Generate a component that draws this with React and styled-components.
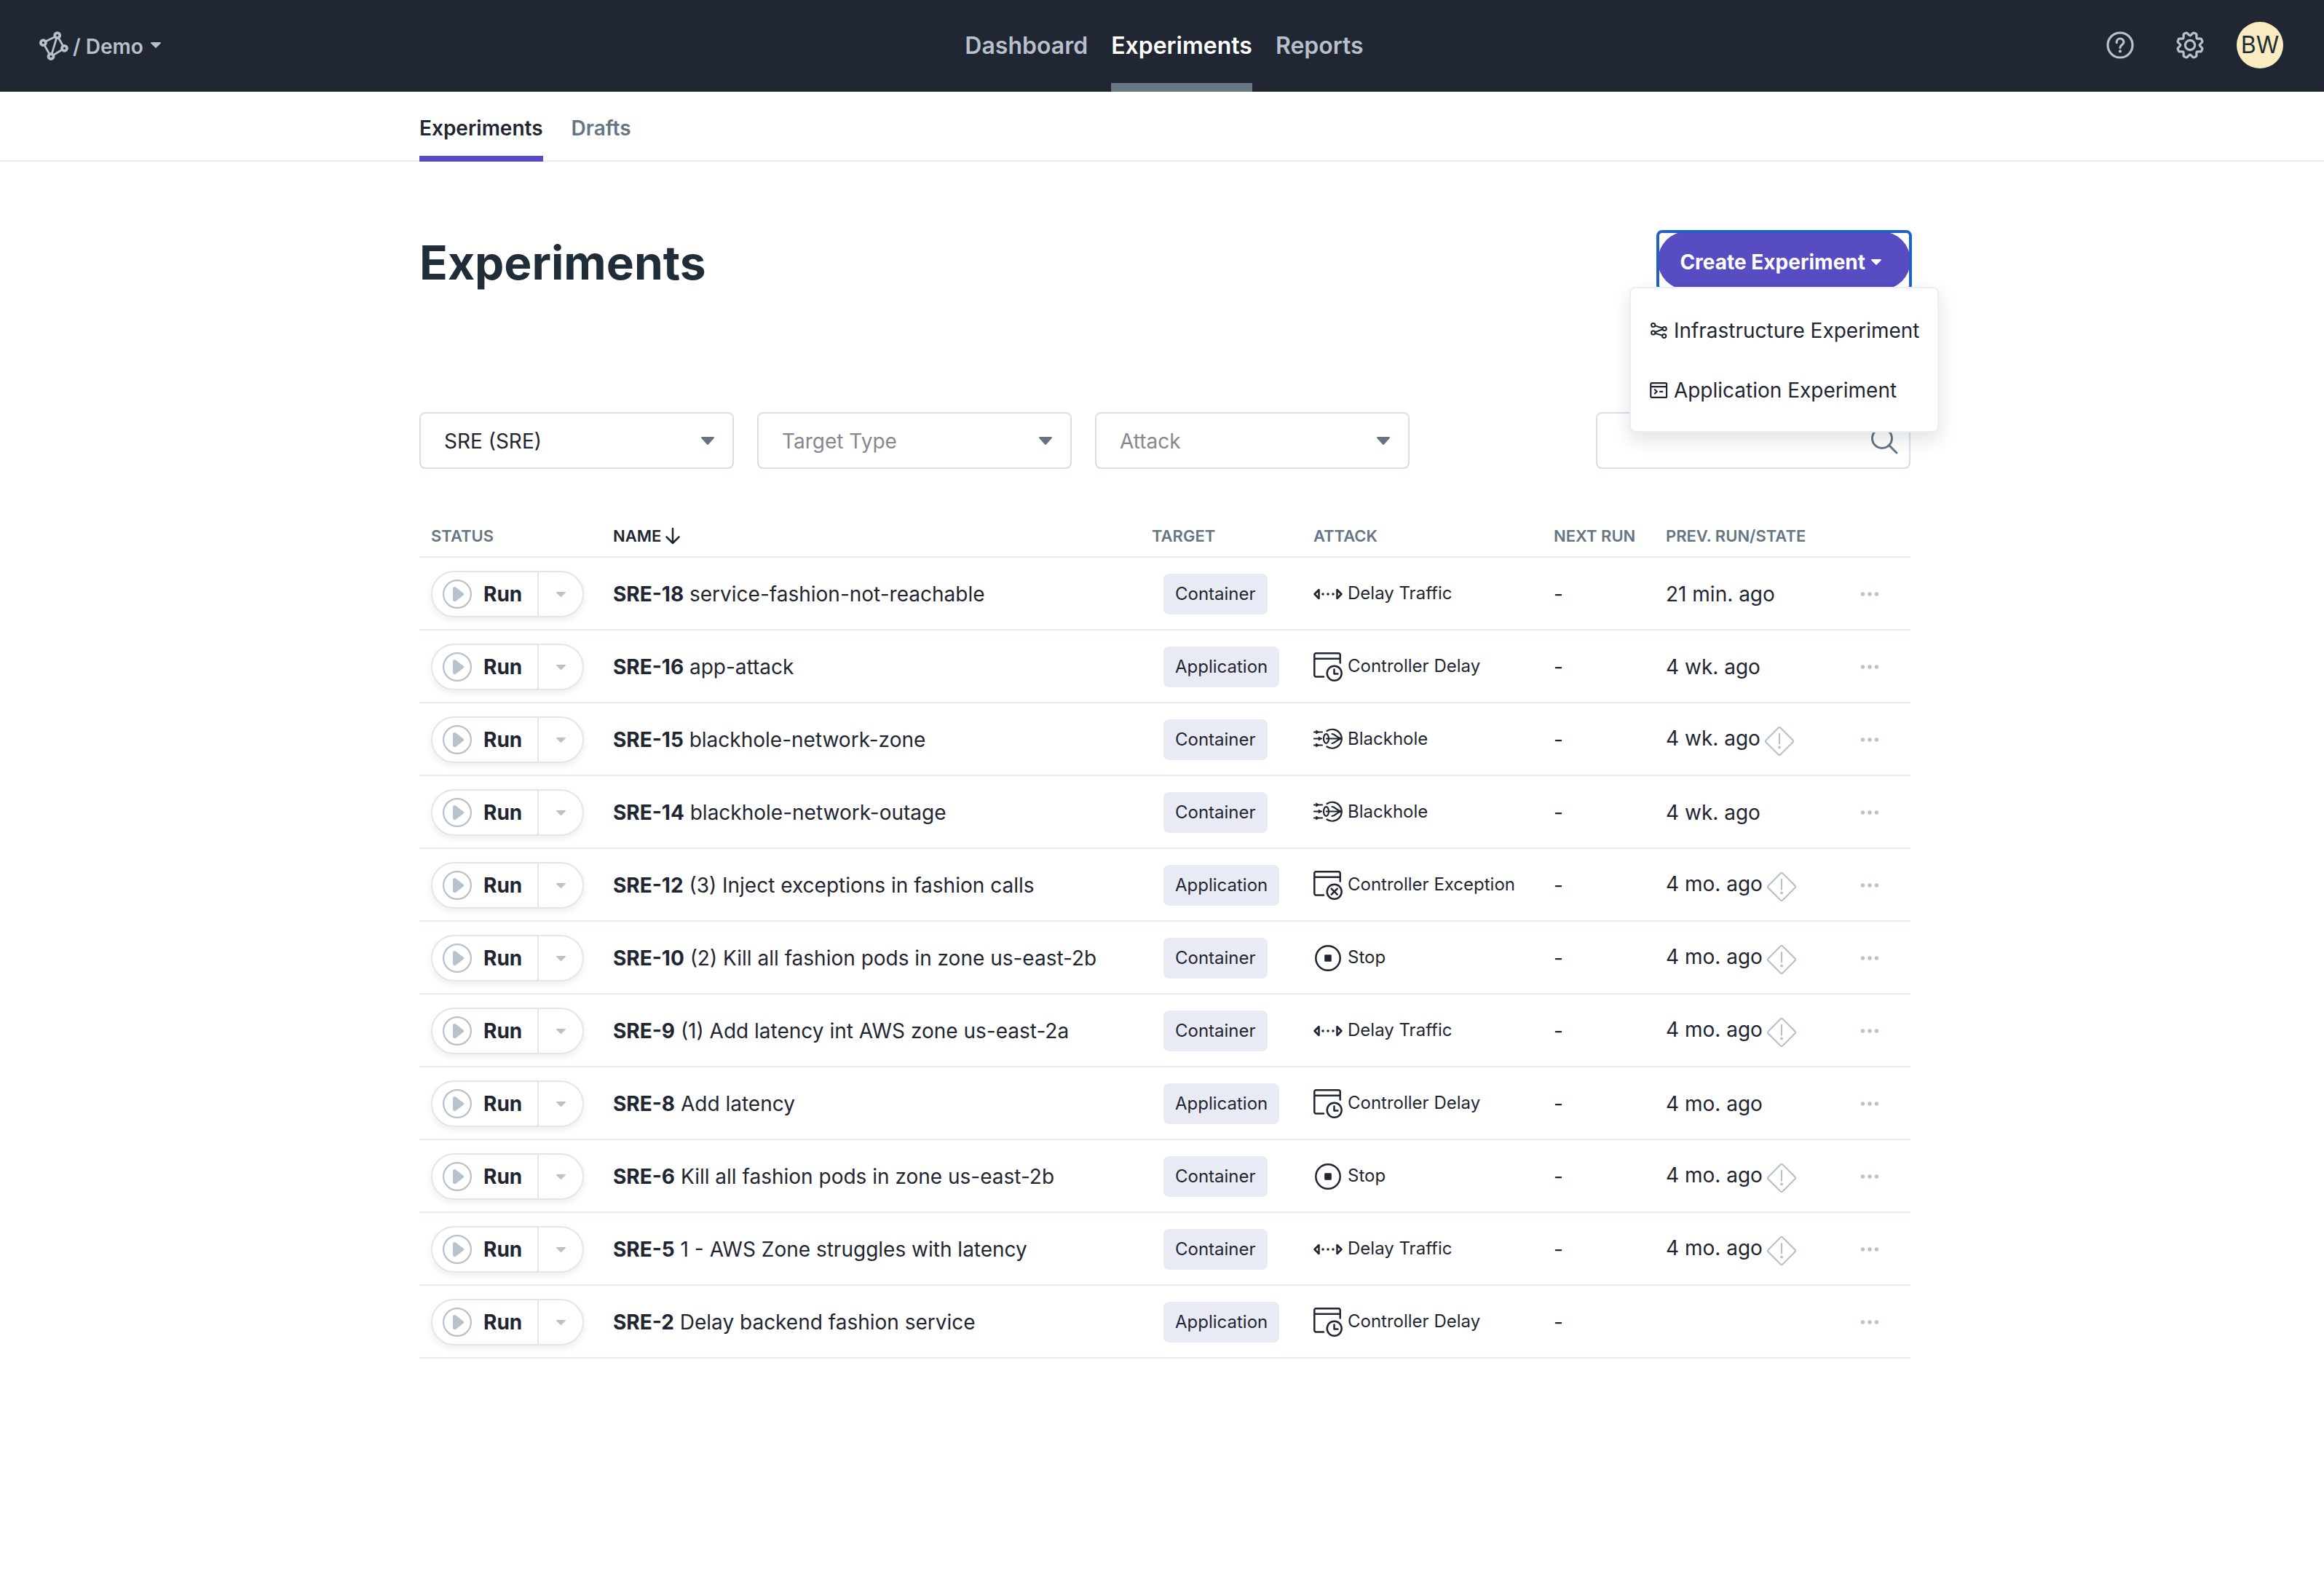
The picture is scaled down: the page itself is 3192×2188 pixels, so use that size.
import React from "react";
import styled, { createGlobalStyle } from "styled-components";

const color = {
  ink: "#1f2632",
  title: "#202d38",
  slate: "#677583",
  mist: "#b9c1cd",
  line: "#e7ebf2",
  field: "#d8dfeb",
  purple: "#574cc1",
  focus: "#2161c5",
  placeholder: "#85898f",
};

const GlobalStyle = createGlobalStyle`
  *, *::before, *::after { box-sizing: border-box; }
  body {
    margin: 0;
    background: #fff;
    color: ${color.ink};
    font-family: Inter, "Liberation Sans", sans-serif;
    font-size: 28px;
    line-height: 40px;
  }
  button, input, select { font: inherit; color: inherit; }
  button { padding: 0; border: 0; background: none; cursor: pointer; }
  a { color: inherit; text-decoration: none; }
  svg { display: block; flex: none; }
`;

/* ---------- header ---------- */

const Header = styled.header`
  display: grid;
  grid-template-columns: 1fr auto 1fr;
  height: 126px;
  padding: 0 44px 0 50px;
  background: #202632;
  color: #b8bfcd;
`;

const Brand = styled.button`
  display: flex;
  align-items: center;
  justify-self: start;
  gap: 6px;
  padding-left: 4px;
  font-weight: 600;
`;

const BrandName = styled.span`
  padding-top: 2px;
`;

const BrandCaret = styled.span`
  display: flex;
  padding: 0 0 2px 4px;
`;

const MainNav = styled.nav`
  display: flex;
  gap: 32px;
`;

const MainLink = styled.a`
  display: flex;
  align-items: center;
  border-bottom: 12px solid ${(p) => (p.$active ? "#697683" : "transparent")};
  padding-top: 12px;
  color: ${(p) => (p.$active ? "#fff" : "inherit")};
  font-size: 32px;
  font-weight: 600;
`;

const Tools = styled.div`
  display: flex;
  align-items: center;
  justify-self: end;
  padding: 0 12px 2px 0;
`;

const ToolButton = styled.button`
  display: flex;
  justify-content: center;
  align-items: center;
  width: 96px;
  height: 64px;
`;

const Avatar = styled.button`
  width: 64px;
  height: 64px;
  margin-left: 16px;
  border-radius: 50%;
  background: #faecc0;
  color: ${color.title};
  font-size: 32px;
  line-height: 64px;
`;

/* ---------- tabs ---------- */

const SubNav = styled.nav`
  height: 96px;
  padding-left: 8px;
  border-bottom: 2px solid ${color.line};
`;

const Centered = styled.div`
  width: 100%;
  max-width: 2048px;
  margin: 0 auto;
`;

const Tabs = styled(Centered)`
  display: flex;
  gap: 39px;
`;

const Tab = styled.a`
  height: 96px;
  padding-top: 30px;
  border-bottom: 8px solid ${(p) => (p.$active ? color.purple : "transparent")};
  color: ${(p) => (p.$active ? color.ink : color.slate)};
  font-weight: 600;
`;

/* ---------- page ---------- */

const Main = styled.main`
  padding: 96px 0 96px 8px;
`;

const TitleRow = styled.div`
  display: flex;
  justify-content: space-between;
  align-items: center;
  height: 80px;
`;

const Title = styled.h1`
  margin: 0;
  padding-top: 6px;
  color: ${color.title};
  font-size: 64px;
  line-height: 80px;
  font-weight: 700;
`;

const CreateWrap = styled.div`
  position: relative;
`;

const CreateButton = styled.button`
  display: flex;
  align-items: center;
  gap: 8px;
  height: 80px;
  padding: 4px 40px 0 30px;
  border-radius: 40px;
  background: ${color.purple};
  color: #fff;
  font-weight: 700;
`;

const FocusFrame = styled.span`
  position: absolute;
  inset: -2px;
  border: 4px solid ${color.focus};
  border-radius: 8px;
  pointer-events: none;
`;

const Menu = styled.div`
  position: absolute;
  z-index: 2;
  top: 76px;
  left: 50%;
  transform: translateX(-50%);
  padding: 16px 0;
  border: 2px solid #e9edf5;
  border-radius: 8px;
  background: #fff;
  box-shadow: 0 10px 24px rgba(31, 38, 50, 0.13);
`;

const MenuItem = styled.button`
  display: flex;
  align-items: center;
  gap: 8px;
  width: 100%;
  height: 82px;
  padding: 2px 25px 0;
  white-space: nowrap;
`;

/* ---------- filters ---------- */

const Filters = styled.form`
  display: flex;
  gap: 32px;
  margin-top: 168px;
`;

const Field = styled.label`
  display: grid;
  align-items: center;
  width: 432px;
  margin-left: ${(p) => (p.$end ? "auto" : "0")};

  & > * { grid-area: 1 / 1; }
  & > svg {
    justify-self: end;
    margin-right: ${(p) => (p.$end ? "16px" : "27px")};
    pointer-events: none;
  }
`;

const control = `
  width: 100%;
  height: 78px;
  padding: 2px 64px 0 32px;
  border: 2px solid ${color.field};
  border-radius: 8px;
  background: #fff;
  outline: 0;
  appearance: none;
`;

const Select = styled.select`
  ${control}
  color: ${(p) => (p.$empty ? color.placeholder : color.ink)};
`;

const SearchInput = styled.input`
  ${control}
`;

/* ---------- table ---------- */

const Table = styled.table`
  width: 100%;
  margin-top: 62px;
  border-spacing: 0;
  table-layout: fixed;
`;

const Col = styled.col`
  width: ${(p) => p.$w};
`;

const Th = styled.th`
  height: 60px;
  padding: 2px 16px 0;
  border-bottom: 2px solid ${color.line};
  color: ${(p) => (p.$sorted ? color.ink : color.slate)};
  font-size: 22px;
  line-height: 28px;
  font-weight: 600;
  text-align: left;
  white-space: nowrap;
`;

const SortButton = styled.button`
  display: flex;
  align-items: center;
  gap: 5px;
  font-weight: 600;
`;

const Td = styled.td`
  height: 100px;
  padding: 2px 16px 0;
  border-bottom: 2px solid ${color.line};
  white-space: nowrap;
`;

const RunGroup = styled.div`
  display: flex;
  width: 210px;
  height: 64px;
  border: 2px solid #e3e5ea;
  border-radius: 32px;
  box-shadow: 0 4px 8px rgba(31, 38, 50, 0.08);
`;

const RunButton = styled.button`
  display: flex;
  flex: 1;
  align-items: center;
  gap: 16px;
  padding-left: 14px;
  font-weight: 700;
`;

const RunMore = styled.button`
  display: flex;
  align-items: center;
  justify-content: center;
  width: 62px;
  border-left: 2px solid #e3e5ea;
`;

const Badge = styled.span`
  display: inline-block;
  margin-left: 16px;
  padding: 0 16px;
  border-radius: 8px;
  background: #e8ebf4;
  font-size: 24px;
  line-height: 56px;
  vertical-align: middle;
`;

const Attack = styled.div`
  display: flex;
  align-items: center;
  gap: 7px;
  font-size: 24px;
  line-height: 36px;
`;

const AttackName = styled.span`
  padding-bottom: 2px;
`;

const Prev = styled.div`
  display: flex;
  align-items: center;
  gap: 6px;
`;

const PrevTime = styled.span`
  padding-bottom: ${(p) => (p.$lifted ? "4px" : "0")};
`;

const StateIcon = styled.span`
  padding-top: 4px;
`;

const MoreButton = styled.button`
  display: flex;
  align-items: center;
  justify-content: center;
  width: 80px;
  height: 48px;
`;

/* ---------- icons ---------- */

const Caret = ({ width, height, fill }) => (
  <svg width={width} height={height} viewBox="0 0 14 8" preserveAspectRatio="none" aria-hidden="true">
    <path d="M1 0h12c1 0 1.200.9.7 1.400L7.700 7.600a1 1 0 0 1-1.400 0L.3 1.400C-.2.9 0 0 1 0Z" fill={fill} />
  </svg>
);

const LogoIcon = () => (
  <svg width="40" height="40" viewBox="0 0 40 40" fill="none" stroke="currentColor" aria-hidden="true">
    <path d="M8.500 14 21.500 7.400M7 19l7 12.500M26.300 9l6.300 11M23.700 9.200 17 31.300M31.300 25.300 19 32.700" strokeWidth="2.800" />
    <g strokeWidth="3.800">
      <circle cx="5.400" cy="15.700" r="3.500" />
      <circle cx="24.700" cy="5.600" r="3.500" />
      <circle cx="34.500" cy="23.300" r="3.500" />
      <circle cx="16" cy="34.500" r="3.500" />
    </g>
  </svg>
);

const HelpIcon = () => (
  <svg width="38" height="38" viewBox="0 0 38 38" fill="none" stroke="currentColor" strokeWidth="3.200" strokeLinecap="round" aria-hidden="true">
    <circle cx="19" cy="19" r="17" />
    <path d="M14.200 15.600v-1A4.800 4.800 0 0 1 19 10a4.900 4.900 0 0 1 5 4.800c0 3.600-5 3.800-5 7.800" />
    <circle cx="19" cy="27.400" r="2.100" fill="currentColor" stroke="none" />
  </svg>
);

const gearPath = (() => {
  const at = (r, deg) => {
    const a = (deg * Math.PI) / 180;
    return `${(19 + r * Math.sin(a)).toFixed(2)} ${(19 - r * Math.cos(a)).toFixed(2)}`;
  };
  let d = `M${at(13.6, -3)}`;
  for (let i = 0; i < 8; i += 1) {
    const c = i * 45;
    d += `Q${at(12.600, c)} ${at(13.600, c + 4)}L${at(15.800, c + 11)}Q${at(18.200, c + 14)} ${at(17.600, c + 20)}`;
    d += `L${at(17.600, c + 25)}Q${at(18.200, c + 31)} ${at(15.800, c + 34)}L${at(13.600, c + 41)}`;
  }
  return `${d}Z`;
})();

const GearIcon = () => (
  <svg width="38" height="38" viewBox="0 0 38 38" fill="none" stroke="currentColor" strokeWidth="3.200" strokeLinejoin="round" aria-hidden="true">
    <path d={gearPath} />
    <circle cx="19" cy="19" r="6.700" />
  </svg>
);

const InfraIcon = () => (
  <svg width="26" height="24" viewBox="0 0 26 24" fill="none" stroke="currentColor" strokeWidth="2" aria-hidden="true">
    <circle cx="5.500" cy="4.500" r="2.600" />
    <circle cx="21" cy="9.500" r="2.600" />
    <circle cx="5.500" cy="15" r="2.600" />
    <circle cx="20.500" cy="19.500" r="2.600" />
    <path d="M8 5.400l10.500 3.300M18.500 10.300 8 14.200M8 15.800l10 3" />
  </svg>
);

const AppIcon = () => (
  <svg width="26" height="24" viewBox="0 0 26 24" fill="none" stroke="currentColor" strokeWidth="2.200" aria-hidden="true">
    <rect x="2.100" y="2.100" width="21.800" height="19.800" rx="1.500" />
    <path d="M2 7.200h22M7 10.500l3.500 3.300L7 17.200M14 13.800h5" />
  </svg>
);

const SearchIcon = () => (
  <svg width="40" height="40" viewBox="0 0 40 40" fill="none" stroke={color.slate} strokeWidth="3" strokeLinecap="round" aria-hidden="true">
    <circle cx="17" cy="17" r="13.500" />
    <path d="M26.500 26.500 37 37" />
  </svg>
);

const SortArrow = () => (
  <svg width="22" height="24" viewBox="0 0 22 24" fill="none" stroke="currentColor" strokeWidth="2.500" strokeLinecap="round" strokeLinejoin="round" aria-hidden="true">
    <path d="M11 2v19.500M2.500 13.500l8.500 8.500 8.500-8.500" />
  </svg>
);

const PlayIcon = () => (
  <svg width="40" height="40" viewBox="0 0 40 40" aria-hidden="true">
    <circle cx="20" cy="20" r="18.900" fill="none" stroke={color.mist} strokeWidth="2.200" />
    <path d="M14 12.500c0-2.200 2.600-3.300 4.200-1.800l10.600 8.200c.8.700.8 1.600 0 2.300l-10.600 8.200c-1.600 1.400-4.200.2-4.200-2Z" fill={color.mist} />
  </svg>
);

const DotsIcon = () => (
  <svg width="26" height="8" viewBox="0 0 26 8" fill={color.mist} aria-hidden="true">
    <circle cx="3.500" cy="4" r="2.700" />
    <circle cx="13" cy="4" r="2.700" />
    <circle cx="22.500" cy="4" r="2.700" />
  </svg>
);

const WarningIcon = () => (
  <svg width="40" height="40" viewBox="0 0 40 40" fill="none" stroke={color.mist} strokeWidth="2.200" aria-hidden="true">
    <path d="M18.400 1.700a2.300 2.300 0 0 1 3.200 0l16.700 16.700a2.300 2.300 0 0 1 0 3.200L21.600 38.300a2.300 2.300 0 0 1-3.200 0L1.700 21.600a2.300 2.300 0 0 1 0-3.200Z" />
    <path d="M20 10v13.500" strokeLinecap="round" />
    <circle cx="20" cy="28.500" r="2" fill={color.mist} stroke="none" />
  </svg>
);

const glyphs = {
  traffic: (
    <>
      <path d="M1.500 20 7.500 14v12ZM38.500 20l-6-6v12Z" />
      <g fill="currentColor" stroke="none">
        <circle cx="13" cy="20" r="1.800" />
        <circle cx="20" cy="20" r="1.800" />
        <circle cx="27" cy="20" r="1.800" />
      </g>
    </>
  ),
  delay: (
    <>
      <path d="M14 33.500H3.500a2.200 2.200 0 0 1-2.200-2.200V3.500a2.200 2.200 0 0 1 2.200-2.200h31a2.200 2.200 0 0 1 2.200 2.200v11M1.300 8.800h35.400" />
      <circle cx="28.700" cy="28.700" r="10" />
      <path d="M28.500 23.500v6h5" />
    </>
  ),
  exception: (
    <>
      <path d="M14 33.500H3.500a2.200 2.200 0 0 1-2.200-2.200V3.500a2.200 2.200 0 0 1 2.200-2.200h31a2.200 2.200 0 0 1 2.200 2.200v11M1.300 8.800h35.400" />
      <circle cx="28.700" cy="28.700" r="10" />
      <path d="m24.700 24.700 8 8M32.700 24.700l-8 8" />
    </>
  ),
  blackhole: (
    <g strokeWidth="2.200">
      <path d="M1 9.500h11M1 18.500h10M1 27.500h11M18.500 8A13 13 0 1 1 18.500 29.500" />
      <path d="M18 18.500H38M25.500 12c5 .5 5.500 5 13 6.500C31 20 30.500 24.500 25.500 25" />
      <ellipse cx="17.500" cy="18.500" rx="3.500" ry="6.300" />
      <path d="M4 7.500v4l3-2ZM7.500 16.500v4l3-2ZM4 25.500v4l3-2Z" fill="currentColor" strokeWidth="1.500" />
    </g>
  ),
  stop: (
    <>
      <circle cx="20" cy="20" r="16.700" />
      <rect x="15.200" y="15.200" width="9.600" height="9.600" rx="1" fill="currentColor" stroke="none" />
    </>
  ),
};

const AttackIcon = ({ kind }) => (
  <svg width="40" height="40" viewBox="0 0 40 40" fill="none" stroke="currentColor" strokeWidth="2.500" strokeLinecap="round" strokeLinejoin="round" aria-hidden="true">
    {glyphs[kind]}
  </svg>
);

/* ---------- data ---------- */

const attacks = {
  traffic: "Delay Traffic",
  delay: "Controller Delay",
  exception: "Controller Exception",
  blackhole: "Blackhole",
  stop: "Stop",
};

const experiments = [
  { id: "SRE-18", name: "service-fashion-not-reachable", target: "Container", attack: "traffic", prev: "21 min. ago" },
  { id: "SRE-16", name: "app-attack", target: "Application", attack: "delay", prev: "4 wk. ago" },
  { id: "SRE-15", name: "blackhole-network-zone", target: "Container", attack: "blackhole", prev: "4 wk. ago", warn: true },
  { id: "SRE-14", name: "blackhole-network-outage", target: "Container", attack: "blackhole", prev: "4 wk. ago" },
  { id: "SRE-12", name: "(3) Inject exceptions in fashion calls", target: "Application", attack: "exception", prev: "4 mo. ago", warn: true },
  { id: "SRE-10", name: "(2) Kill all fashion pods in zone us-east-2b", target: "Container", attack: "stop", prev: "4 mo. ago", warn: true },
  { id: "SRE-9", name: "(1) Add latency int AWS zone us-east-2a", target: "Container", attack: "traffic", prev: "4 mo. ago", warn: true },
  { id: "SRE-8", name: "Add latency", target: "Application", attack: "delay", prev: "4 mo. ago" },
  { id: "SRE-6", name: "Kill all fashion pods in zone us-east-2b", target: "Container", attack: "stop", prev: "4 mo. ago", warn: true },
  { id: "SRE-5", name: "1 - AWS Zone struggles with latency", target: "Container", attack: "traffic", prev: "4 mo. ago", warn: true },
  { id: "SRE-2", name: "Delay backend fashion service", target: "Application", attack: "delay", prev: "" },
];

const ExperimentRow = ({ item }) => (
  <tr>
    <Td>
      <RunGroup>
        <RunButton type="button"><PlayIcon />Run</RunButton>
        <RunMore type="button" aria-label="More run options">
          <Caret width={13} height={7} fill={color.mist} />
        </RunMore>
      </RunGroup>
    </Td>
    <Td><a href="#experiment"><b>{item.id}</b> {item.name}</a></Td>
    <Td><Badge>{item.target}</Badge></Td>
    <Td>
      <Attack>
        <AttackIcon kind={item.attack} />
        <AttackName>{attacks[item.attack]}</AttackName>
      </Attack>
    </Td>
    <Td>-</Td>
    <Td>
      <Prev>
        <PrevTime $lifted={item.warn}>{item.prev}</PrevTime>
        {item.warn && <StateIcon><WarningIcon /></StateIcon>}
      </Prev>
    </Td>
    <Td>
      <MoreButton type="button" aria-label="Experiment actions"><DotsIcon /></MoreButton>
    </Td>
  </tr>
);

export default function App() {
  return (
    <>
      <GlobalStyle />
      <Header>
        <Brand type="button">
          <LogoIcon />
          <BrandName>/ Demo</BrandName>
          <BrandCaret><Caret width={14} height={8} fill="currentColor" /></BrandCaret>
        </Brand>
        <MainNav>
          <MainLink href="#dashboard">Dashboard</MainLink>
          <MainLink href="#experiments" $active>Experiments</MainLink>
          <MainLink href="#reports">Reports</MainLink>
        </MainNav>
        <Tools>
          <ToolButton type="button" aria-label="Help"><HelpIcon /></ToolButton>
          <ToolButton type="button" aria-label="Settings"><GearIcon /></ToolButton>
          <Avatar type="button">BW</Avatar>
        </Tools>
      </Header>
      <SubNav>
        <Tabs>
          <Tab href="#experiments" $active>Experiments</Tab>
          <Tab href="#drafts">Drafts</Tab>
        </Tabs>
      </SubNav>
      <Main>
        <Centered>
          <TitleRow>
            <Title>Experiments</Title>
            <CreateWrap>
              <CreateButton type="button">
                Create Experiment
                <Caret width={14} height={8} fill="#fff" />
              </CreateButton>
              <FocusFrame />
              <Menu>
                <MenuItem type="button"><InfraIcon />Infrastructure Experiment</MenuItem>
                <MenuItem type="button"><AppIcon />Application Experiment</MenuItem>
              </Menu>
            </CreateWrap>
          </TitleRow>
          <Filters>
            <Field>
              <Select aria-label="Team"><option>SRE (SRE)</option></Select>
              <Caret width={18} height={11} fill={color.slate} />
            </Field>
            <Field>
              <Select aria-label="Target Type" $empty><option>Target Type</option></Select>
              <Caret width={18} height={11} fill={color.slate} />
            </Field>
            <Field>
              <Select aria-label="Attack" $empty><option>Attack</option></Select>
              <Caret width={18} height={11} fill={color.slate} />
            </Field>
            <Field $end>
              <SearchInput type="text" aria-label="Search" />
              <SearchIcon />
            </Field>
          </Filters>
          <Table>
            <colgroup>
              <Col $w="250px" />
              <Col $w="auto" />
              <Col $w="222px" />
              <Col $w="330px" />
              <Col $w="154px" />
              <Col $w="240px" />
              <Col $w="112px" />
            </colgroup>
            <thead>
              <tr>
                <Th scope="col">STATUS</Th>
                <Th scope="col" $sorted><SortButton type="button">NAME<SortArrow /></SortButton></Th>
                <Th scope="col">TARGET</Th>
                <Th scope="col">ATTACK</Th>
                <Th scope="col">NEXT RUN</Th>
                <Th scope="col">PREV. RUN/STATE</Th>
                <Th scope="col" aria-label="Actions" />
              </tr>
            </thead>
            <tbody>
              {experiments.map((item) => <ExperimentRow key={item.id} item={item} />)}
            </tbody>
          </Table>
        </Centered>
      </Main>
    </>
  );
}
